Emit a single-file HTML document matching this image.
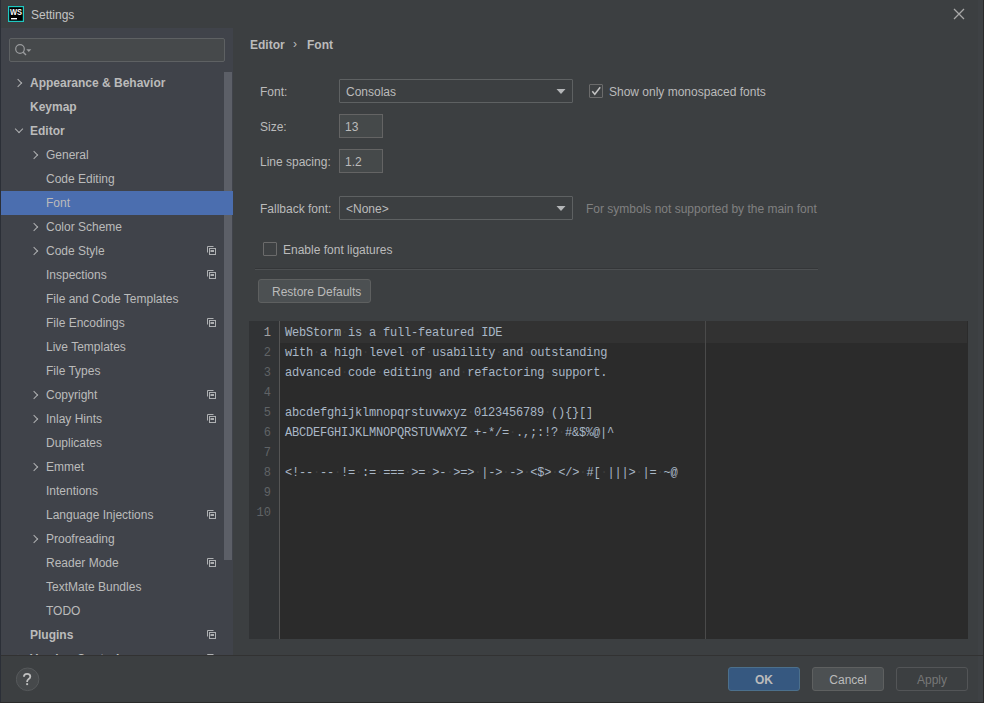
<!DOCTYPE html>
<html><head><meta charset="utf-8">
<style>
*{box-sizing:border-box;margin:0;padding:0}
html,body{width:984px;height:703px;overflow:hidden;background:#3c3f41}
body{position:relative;font-family:"Liberation Sans",sans-serif;font-size:12px;color:#bbbbbb}
.a{position:absolute}
.t{position:absolute;white-space:nowrap;line-height:14px}
#left{position:absolute;left:1px;top:28px;width:232px;height:627px;background:#40434a;overflow:hidden}
.row{position:absolute;left:0;width:232px;height:24px}
.row .t{top:5px}
.sel{background:#4b6eaf}
.chev{position:absolute;width:6px;height:6px;border-right:1.4px solid #aeb0b2;border-bottom:1.4px solid #aeb0b2}
.chr{transform:rotate(-45deg)}
.chd{transform:rotate(45deg)}
.b{font-weight:bold}
.ico{position:absolute;left:205px;top:6px;width:11px;height:11px}
.field{position:absolute;background:#45494a;border:1px solid #646464}
.combo{position:absolute;border:1px solid #5e6162;border-radius:1px}
.btn{position:absolute;background:#4c5052;border:1px solid #5e6060;border-radius:3px;text-align:center}
.cb{position:absolute;width:14px;height:14px;border:1px solid #6b6b6b;background:#3e4143;border-radius:1px}
.ed{position:absolute;font-family:"Liberation Mono",monospace;font-size:12px;letter-spacing:-0.2px;color:#a9b7c6;white-space:pre;line-height:20px}
.ed i{font-style:normal;color:#3c3c3c}
.ln{position:absolute;font-family:"Liberation Mono",monospace;font-size:12px;color:#606366;text-align:right;width:21px;line-height:20px}
</style></head><body>
<div class="a" style="left:0;top:0;width:1px;height:703px;background:#2b2f37"></div>
<div class="a" style="left:978px;top:0;width:5px;height:703px;background:#3e4144"></div>
<div class="a" style="left:983px;top:0;width:1px;height:703px;background:#2b2b2b"></div>
<div class="a" style="left:0;top:702px;width:984px;height:1px;background:#2b2b2b"></div>
<svg class="a" style="left:8px;top:6px" width="16" height="16" viewBox="0 0 16 16">
<rect x="0" y="0" width="16" height="16" fill="#1fc7c0"/>
<rect x="1.2" y="1.2" width="13.6" height="13.6" fill="#000"/>
<text x="2" y="9.1" font-family="Liberation Sans" font-weight="bold" font-size="9" textLength="12" lengthAdjust="spacingAndGlyphs" fill="#fff">WS</text>
<rect x="3" y="12" width="6" height="1.4" fill="#fff"/>
</svg>
<div class="t" style="left:31px;top:8px;color:#c4c4c4">Settings</div>
<svg class="a" style="left:953px;top:8px" width="12" height="12" viewBox="0 0 12 12"><path d="M1 1L11 11M11 1L1 11" stroke="#a8a8a8" stroke-width="1.3"/></svg>
<div id="left"><div class="field" style="left:8px;top:10px;width:216px;height:24px;border-color:#5e6163;background:#46494b;border-radius:2px"></div>
<svg class="a" style="left:13px;top:15px" width="18" height="14" viewBox="0 0 18 14"><circle cx="6" cy="6" r="4.3" fill="none" stroke="#9a9c9e" stroke-width="1.2"/><path d="M9 9L12 12" stroke="#9a9c9e" stroke-width="1.4"/><path d="M12.3 6.3h5l-2.5 2.8z" fill="#9a9c9e"/></svg>
<div class="a" style="left:223px;top:44px;width:8px;height:488px;background:#5c5f67"></div>
<div class="row" style="top:43px"><div class="chev chr" style="left:14px;top:9px"></div><div class="t b" style="left:29px">Appearance &amp; Behavior</div></div>
<div class="row" style="top:67px"><div class="t b" style="left:29px">Keymap</div></div>
<div class="row" style="top:91px"><div class="chev chd" style="left:15px;top:7px"></div><div class="t b" style="left:29px">Editor</div></div>
<div class="row" style="top:115px"><div class="chev chr" style="left:30px;top:9px"></div><div class="t" style="left:45px">General</div></div>
<div class="row" style="top:139px"><div class="t" style="left:45px">Code Editing</div></div>
<div class="row sel" style="top:163px"><div class="t" style="left:45px">Font</div></div>
<div class="row" style="top:187px"><div class="chev chr" style="left:30px;top:9px"></div><div class="t" style="left:45px">Color Scheme</div></div>
<div class="row" style="top:211px"><div class="chev chr" style="left:30px;top:9px"></div><div class="t" style="left:45px">Code Style</div><svg class="ico" viewBox="0 0 11 11"><path d="M1.5 7.5V1.5H7.5" fill="none" stroke="#aeb0b2" stroke-width="1"/><rect x="3.5" y="3.5" width="6" height="6" fill="none" stroke="#aeb0b2" stroke-width="1"/><rect x="4.5" y="5" width="3.5" height="2" fill="#aeb0b2"/></svg></div>
<div class="row" style="top:235px"><div class="t" style="left:45px">Inspections</div><svg class="ico" viewBox="0 0 11 11"><path d="M1.5 7.5V1.5H7.5" fill="none" stroke="#aeb0b2" stroke-width="1"/><rect x="3.5" y="3.5" width="6" height="6" fill="none" stroke="#aeb0b2" stroke-width="1"/><rect x="4.5" y="5" width="3.5" height="2" fill="#aeb0b2"/></svg></div>
<div class="row" style="top:259px"><div class="t" style="left:45px">File and Code Templates</div></div>
<div class="row" style="top:283px"><div class="t" style="left:45px">File Encodings</div><svg class="ico" viewBox="0 0 11 11"><path d="M1.5 7.5V1.5H7.5" fill="none" stroke="#aeb0b2" stroke-width="1"/><rect x="3.5" y="3.5" width="6" height="6" fill="none" stroke="#aeb0b2" stroke-width="1"/><rect x="4.5" y="5" width="3.5" height="2" fill="#aeb0b2"/></svg></div>
<div class="row" style="top:307px"><div class="t" style="left:45px">Live Templates</div></div>
<div class="row" style="top:331px"><div class="t" style="left:45px">File Types</div></div>
<div class="row" style="top:355px"><div class="chev chr" style="left:30px;top:9px"></div><div class="t" style="left:45px">Copyright</div><svg class="ico" viewBox="0 0 11 11"><path d="M1.5 7.5V1.5H7.5" fill="none" stroke="#aeb0b2" stroke-width="1"/><rect x="3.5" y="3.5" width="6" height="6" fill="none" stroke="#aeb0b2" stroke-width="1"/><rect x="4.5" y="5" width="3.5" height="2" fill="#aeb0b2"/></svg></div>
<div class="row" style="top:379px"><div class="chev chr" style="left:30px;top:9px"></div><div class="t" style="left:45px">Inlay Hints</div><svg class="ico" viewBox="0 0 11 11"><path d="M1.5 7.5V1.5H7.5" fill="none" stroke="#aeb0b2" stroke-width="1"/><rect x="3.5" y="3.5" width="6" height="6" fill="none" stroke="#aeb0b2" stroke-width="1"/><rect x="4.5" y="5" width="3.5" height="2" fill="#aeb0b2"/></svg></div>
<div class="row" style="top:403px"><div class="t" style="left:45px">Duplicates</div></div>
<div class="row" style="top:427px"><div class="chev chr" style="left:30px;top:9px"></div><div class="t" style="left:45px">Emmet</div></div>
<div class="row" style="top:451px"><div class="t" style="left:45px">Intentions</div></div>
<div class="row" style="top:475px"><div class="t" style="left:45px">Language Injections</div><svg class="ico" viewBox="0 0 11 11"><path d="M1.5 7.5V1.5H7.5" fill="none" stroke="#aeb0b2" stroke-width="1"/><rect x="3.5" y="3.5" width="6" height="6" fill="none" stroke="#aeb0b2" stroke-width="1"/><rect x="4.5" y="5" width="3.5" height="2" fill="#aeb0b2"/></svg></div>
<div class="row" style="top:499px"><div class="chev chr" style="left:30px;top:9px"></div><div class="t" style="left:45px">Proofreading</div></div>
<div class="row" style="top:523px"><div class="t" style="left:45px">Reader Mode</div><svg class="ico" viewBox="0 0 11 11"><path d="M1.5 7.5V1.5H7.5" fill="none" stroke="#aeb0b2" stroke-width="1"/><rect x="3.5" y="3.5" width="6" height="6" fill="none" stroke="#aeb0b2" stroke-width="1"/><rect x="4.5" y="5" width="3.5" height="2" fill="#aeb0b2"/></svg></div>
<div class="row" style="top:547px"><div class="t" style="left:45px">TextMate Bundles</div></div>
<div class="row" style="top:571px"><div class="t" style="left:45px">TODO</div></div>
<div class="row" style="top:595px"><div class="t b" style="left:29px">Plugins</div><svg class="ico" viewBox="0 0 11 11"><path d="M1.5 7.5V1.5H7.5" fill="none" stroke="#aeb0b2" stroke-width="1"/><rect x="3.5" y="3.5" width="6" height="6" fill="none" stroke="#aeb0b2" stroke-width="1"/><rect x="4.5" y="5" width="3.5" height="2" fill="#aeb0b2"/></svg></div>
<div class="row" style="top:619px"><div class="chev chr" style="left:14px;top:9px"></div><div class="t b" style="left:29px">Version Control</div><svg class="ico" viewBox="0 0 11 11"><path d="M1.5 7.5V1.5H7.5" fill="none" stroke="#aeb0b2" stroke-width="1"/><rect x="3.5" y="3.5" width="6" height="6" fill="none" stroke="#aeb0b2" stroke-width="1"/><rect x="4.5" y="5" width="3.5" height="2" fill="#aeb0b2"/></svg></div></div>
<div class="t b" style="left:250px;top:38px">Editor</div>
<div class="t" style="left:293px;top:37px">&#8250;</div>
<div class="t b" style="left:307px;top:38px">Font</div>
<div class="t" style="left:260px;top:85px;">Font:</div>
<div class="combo" style="left:339px;top:79px;width:234px;height:24px"></div>
<div class="t" style="left:346px;top:85px;">Consolas</div>
<svg class="a" style="left:556px;top:89px" width="10" height="6"><path d="M0.5 0h9L5 5z" fill="#b4b6b8"/></svg>
<div class="cb" style="left:589px;top:84px"></div>
<svg class="a" style="left:590px;top:85px" width="12" height="12" viewBox="0 0 12 12"><path d="M2.3 6.3L4.8 9.3L10.2 2.3" fill="none" stroke="#c4c4c4" stroke-width="1.5"/></svg>
<div class="t" style="left:609px;top:85px;">Show only monospaced fonts</div>
<div class="t" style="left:260px;top:120px;">Size:</div>
<div class="field" style="left:339px;top:114px;width:44px;height:24px"></div>
<div class="t" style="left:345px;top:120px;">13</div>
<div class="t" style="left:260px;top:155px;">Line spacing:</div>
<div class="field" style="left:339px;top:149px;width:44px;height:24px"></div>
<div class="t" style="left:345px;top:155px;">1.2</div>
<div class="t" style="left:260px;top:202px;">Fallback font:</div>
<div class="combo" style="left:339px;top:196px;width:234px;height:24px"></div>
<div class="t" style="left:346px;top:202px;">&lt;None&gt;</div>
<svg class="a" style="left:556px;top:206px" width="10" height="6"><path d="M0.5 0h9L5 5z" fill="#b4b6b8"/></svg>
<div class="t" style="left:586px;top:202px;color:#808080">For symbols not supported by the main font</div>
<div class="cb" style="left:263px;top:242px"></div>
<div class="t" style="left:283px;top:243px;">Enable font ligatures</div>
<div class="a" style="left:255px;top:268px;width:563px;height:1px;background:#343638"></div>
<div class="a" style="left:255px;top:269px;width:563px;height:1px;background:#4d5052"></div>
<div class="btn" style="left:258px;top:279px;width:113px;height:24px"></div>
<div class="t" style="left:272px;top:285px;">Restore Defaults</div>
<div class="a" style="left:249px;top:321px;width:719px;height:318px;background:#2b2b2b"></div>
<div class="a" style="left:249px;top:321px;width:31px;height:318px;background:#313335"></div>
<div class="a" style="left:280px;top:321px;width:687px;height:22px;background:#323232"></div>
<div class="a" style="left:279px;top:321px;width:1px;height:318px;background:#555555"></div>
<div class="a" style="left:705px;top:321px;width:1px;height:318px;background:#4a4a4a"></div>
<div class="ln" style="left:250px;top:323px;color:#a4a3a3">1</div>
<div class="ed" style="left:285px;top:323px">WebStorm<i>·</i>is<i>·</i>a<i>·</i>full-featured<i>·</i>IDE</div>
<div class="ln" style="left:250px;top:343px">2</div>
<div class="ed" style="left:285px;top:343px">with<i>·</i>a<i>·</i>high<i>·</i>level<i>·</i>of<i>·</i>usability<i>·</i>and<i>·</i>outstanding</div>
<div class="ln" style="left:250px;top:363px">3</div>
<div class="ed" style="left:285px;top:363px">advanced<i>·</i>code<i>·</i>editing<i>·</i>and<i>·</i>refactoring<i>·</i>support.</div>
<div class="ln" style="left:250px;top:383px">4</div>
<div class="ln" style="left:250px;top:403px">5</div>
<div class="ed" style="left:285px;top:403px">abcdefghijklmnopqrstuvwxyz<i>·</i>0123456789<i>·</i>(){}[]</div>
<div class="ln" style="left:250px;top:423px">6</div>
<div class="ed" style="left:285px;top:423px">ABCDEFGHIJKLMNOPQRSTUVWXYZ<i>·</i>+-*/=<i>·</i>.,;:!?<i>·</i>#&amp;$%@|^</div>
<div class="ln" style="left:250px;top:443px">7</div>
<div class="ln" style="left:250px;top:463px">8</div>
<div class="ed" style="left:285px;top:463px">&lt;!--<i>·</i>--<i>·</i>!=<i>·</i>:=<i>·</i>===<i>·</i>&gt;=<i>·</i>&gt;-<i>·</i>&gt;=&gt;<i>·</i>|-&gt;<i>·</i>-&gt;<i>·</i>&lt;$&gt;<i>·</i>&lt;/&gt;<i>·</i>#[<i>·</i>|||&gt;<i>·</i>|=<i>·</i>~@</div>
<div class="ln" style="left:250px;top:483px">9</div>
<div class="ln" style="left:250px;top:503px">10</div>
<div class="a" style="left:1px;top:655px;width:982px;height:1px;background:#323232"></div>
<svg class="a" style="left:16px;top:667px" width="24" height="25" viewBox="0 0 24 25">
<circle cx="11.6" cy="12.3" r="11.3" fill="#46494b" stroke="#56595b" stroke-width="1"/>
<path d="M7.9 9.8C7.9 7.8 9.4 6.9 11.1 6.9C12.9 6.9 14.3 8 14.3 9.6C14.3 11.1 13.4 11.7 12.4 12.3C11.5 12.9 11.1 13.5 11.1 15" fill="none" stroke="#c0c0c0" stroke-width="1.8"/>
<rect x="10.2" y="16.2" width="1.9" height="1.9" fill="#c0c0c0"/>
</svg>
<div class="btn" style="left:728px;top:667px;width:72px;height:24px;background:#365880;border-color:#4c708c"></div>
<div class="t" style="left:728px;top:673px;width:72px;text-align:center"><b>OK</b></div>
<div class="btn" style="left:812px;top:667px;width:72px;height:24px"></div>
<div class="t" style="left:812px;top:673px;width:72px;text-align:center">Cancel</div>
<div class="btn" style="left:896px;top:667px;width:72px;height:24px;background:#3c3f41;border-color:#535557"></div>
<div class="t" style="left:896px;top:673px;width:72px;text-align:center;color:#777777">Apply</div>
</body></html>
